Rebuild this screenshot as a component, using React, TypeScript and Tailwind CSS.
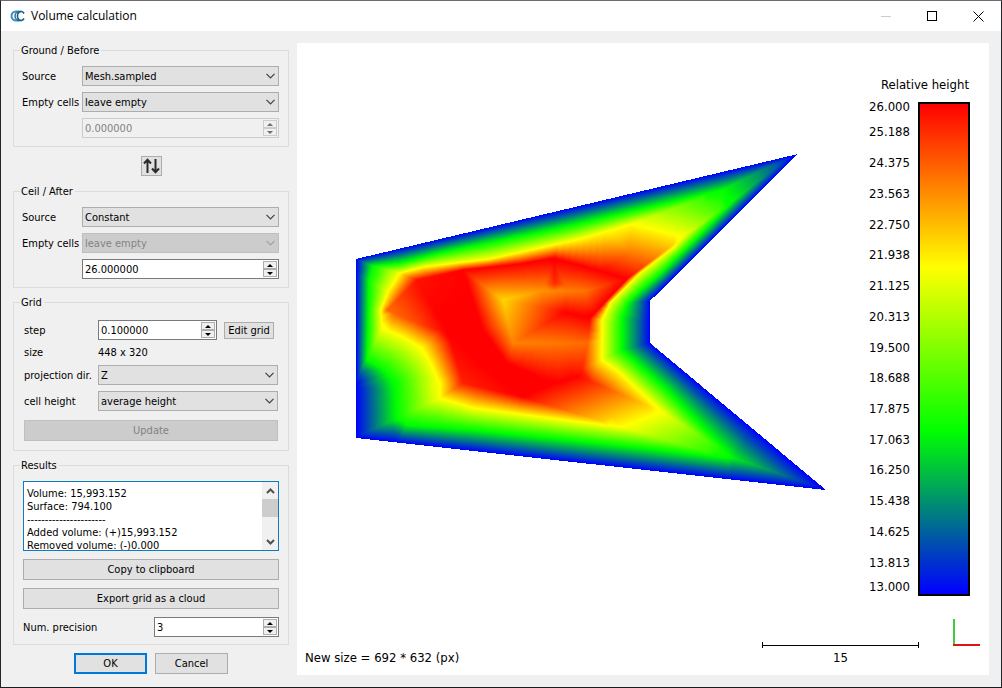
import { useState } from 'react';
import type { ReactNode } from 'react';
import clsx from 'clsx';

type Vertex = [x: number, y: number, t: number];
type Triangle = [number, number, number];

// relative heights: 0 = lowest (blue), 1 = highest (red)
const GREEN = 1 / 3;
const YELLOW = 2 / 3;

const RAMP = [
  { offset: 0, color: '#0000ff' },
  { offset: GREEN, color: '#00ff00' },
  { offset: YELLOW, color: '#ffff00' },
  { offset: 1, color: '#ff0000' },
];

const OUTLINE: Vertex[] = [
  [356, 259, 0], [798, 154, 0], [650, 301, 0], [650, 343, 0], [826, 490, 0], [356, 438, 0], [356, 259, 0],
];

const level = (t: number, points: [number, number][]): Vertex[] => points.map(([x, y]) => [x, y, t]);

const BREAKLINES: Vertex[][] = [
  OUTLINE,
  level(GREEN, [
    [373, 266], [400, 263], [440, 253], [560, 228], [640, 209], [722, 190], [733, 201], [703, 232], [693, 242],
    [660, 274], [640, 291], [628, 303], [622, 318], [622, 350], [667, 390], [728, 453], [728, 458], [643, 448],
    [560, 439], [473, 430], [407, 425], [397, 418], [395, 383], [383, 370], [367, 360], [368, 327],
    [369, 280], [373, 266],
  ]),
  level(YELLOW, [
    [400, 273], [423, 267], [490, 259], [580, 239], [632, 224], [683, 237], [673, 248], [640, 273],
    [610, 303], [602, 320], [602, 360], [620, 373], [662, 412], [622, 427], [580, 422], [473, 408],
    [440, 398], [440, 383], [430, 362], [422, 348], [403, 337], [382, 328], [381, 310], [388, 292], [400, 273],
  ]),
  // upper wing
  [[632, 224, YELLOW], [722, 190, GREEN]],
  [[657, 230, YELLOW], [727, 195, GREEN]],
  [[683, 237, YELLOW], [733, 201, GREEN]],
  [[722, 190, GREEN], [768, 167, 0.15], [798, 154, 0]],
  [[733, 201, GREEN], [770, 172, 0.15], [798, 154, 0]],
  // lower wing
  [[662, 412, YELLOW], [728, 453, GREEN]],
  [[642, 419, YELLOW], [728, 456, GREEN]],
  [[622, 427, YELLOW], [728, 458, GREEN]],
  [[728, 456, GREEN], [780, 474, 0.16], [826, 490, 0]],
  // corners
  [[356, 259, 0], [373, 266, GREEN], [400, 273, YELLOW], [417, 280, 0.98]],
  [[356, 438, 0], [397, 418, GREEN], [440, 398, YELLOW], [463, 383, 0.96]],
  [[356, 378, 0], [367, 360, GREEN], [382, 328, YELLOW]],
  [[650, 301, 0], [628, 303, GREEN]],
  [[650, 343, 0], [622, 350, GREEN], [602, 360, YELLOW], [588, 343, 0.86]],
  // plateau
  [[387, 310, 0.86], [417, 280, 0.98], [463, 270, 1], [520, 264, 1], [554, 258, 1], [627, 279, 1]],
  [[387, 310, 0.86], [415, 322, 0.9], [448, 333, 1], [463, 383, 0.96], [523, 397, 1], [553, 384, 1], [578, 376, 1]],
  [[417, 280, 0.98], [437, 315, 1], [448, 333, 1], [480, 365, 1], [523, 397, 1]],
  [[463, 270, 1], [473, 300, 1], [483, 330, 1], [507, 363, 1], [553, 383, 1]],
  [[627, 279, 1], [590, 318, 1], [565, 312, 1]],
  [[590, 320, 1], [588, 343, 0.86], [582, 370, 0.96]],
  // inner pit
  [[463, 270, 1], [503, 300, 0.72], [542, 291, 0.81], [585, 291, 0.85], [627, 279, 1]],
  [[503, 300, 0.72], [513, 343, 0.83], [550, 343, 0.84], [588, 343, 0.86]],
  [[503, 300, 0.72], [565, 312, 1], [513, 343, 0.83], [507, 363, 1]],
  [[554, 262, 1], [555, 283, 0.95]],
  [[542, 291, 0.81], [554, 262, 1], [568, 291, 0.84]],
  // slopes from the plateau down to the wings
  [[632, 224, YELLOW], [627, 279, 1]],
  [[657, 230, YELLOW], [627, 279, 1]],
  [[683, 237, YELLOW], [627, 279, 1]],
  [[578, 376, 1], [662, 412, YELLOW]],
  [[578, 376, 1], [642, 419, YELLOW]],
  [[578, 376, 1], [622, 427, YELLOW]],
  [[523, 397, 1], [622, 427, YELLOW]],
];

function densify(line: Vertex[], step: number): Vertex[] {
  const out: Vertex[] = [];
  for (let i = 0; i < line.length - 1; i++) {
    const [x0, y0, t0] = line[i];
    const [x1, y1, t1] = line[i + 1];
    const n = Math.max(1, Math.round(Math.hypot(x1 - x0, y1 - y0) / step));
    for (let k = 0; k < n; k++) {
      const f = k / n;
      out.push([x0 + (x1 - x0) * f, y0 + (y1 - y0) * f, t0 + (t1 - t0) * f]);
    }
  }
  out.push(line[line.length - 1]);
  return out;
}

function collectVertices(): Vertex[] {
  const vertices: Vertex[] = [];
  for (const line of BREAKLINES) {
    for (const v of densify(line, 7)) {
      if (!vertices.some((u) => Math.hypot(u[0] - v[0], u[1] - v[1]) < 2.5)) vertices.push(v);
    }
  }
  return vertices;
}

function inCircumcircle(p: Vertex, a: Vertex, b: Vertex, c: Vertex) {
  const bx = b[0] - a[0];
  const by = b[1] - a[1];
  const cx = c[0] - a[0];
  const cy = c[1] - a[1];
  const d = 2 * (bx * cy - by * cx);
  if (d === 0) return true;
  const ux = (cy * (bx * bx + by * by) - by * (cx * cx + cy * cy)) / d;
  const uy = (bx * (cx * cx + cy * cy) - cx * (bx * bx + by * by)) / d;
  const px = p[0] - a[0] - ux;
  const py = p[1] - a[1] - uy;
  return px * px + py * py < ux * ux + uy * uy - 1e-7;
}

// Bowyer-Watson
function triangulate(points: Vertex[]): Triangle[] {
  const n = points.length;
  const all: Vertex[] = [...points, [-20000, -18000, 0], [21000, -19000, 0], [500, 23000, 0]];
  let triangles: Triangle[] = [[n, n + 1, n + 2]];

  for (let i = 0; i < n; i++) {
    const edges = new Map<string, [number, number]>();
    triangles = triangles.filter(([a, b, c]) => {
      if (!inCircumcircle(all[i], all[a], all[b], all[c])) return true;
      for (const [u, v] of [[a, b], [b, c], [c, a]]) {
        const key = u < v ? `${u}-${v}` : `${v}-${u}`;
        if (edges.has(key)) edges.delete(key);
        else edges.set(key, [u, v]);
      }
      return false;
    });
    for (const [u, v] of edges.values()) triangles.push([u, v, i]);
  }
  return triangles.filter((t) => t.every((k) => k < n));
}

function insideOutline(x: number, y: number) {
  let inside = false;
  for (let i = 0; i < OUTLINE.length - 1; i++) {
    const [x0, y0] = OUTLINE[i];
    const [x1, y1] = OUTLINE[i + 1];
    if (y0 > y !== y1 > y && x < ((x1 - x0) * (y - y0)) / (y1 - y0) + x0) inside = !inside;
  }
  return inside;
}

function rampColor(t: number) {
  if (t < 0.01) return '#0000ff';
  if (t < 0.5) return '#00ff00';
  return t < 0.8 ? '#ffff00' : '#ff0000';
}

function buildFacets() {
  const vertices = collectVertices();
  return triangulate(vertices)
    .map((tri) => tri.map((k) => vertices[k]))
    .filter(([a, b, c]) => insideOutline((a[0] + b[0] + c[0]) / 3, (a[1] + b[1] + c[1]) / 3))
    .map(([a, b, c]) => {
      const points = [a, b, c].map(([x, y]) => `${x.toFixed(2)},${y.toFixed(2)}`).join(' ');
      const det = (b[0] - a[0]) * (c[1] - a[1]) - (c[0] - a[0]) * (b[1] - a[1]);
      const gx = ((b[2] - a[2]) * (c[1] - a[1]) - (c[2] - a[2]) * (b[1] - a[1])) / det;
      const gy = ((c[2] - a[2]) * (b[0] - a[0]) - (b[2] - a[2]) * (c[0] - a[0])) / det;
      const g2 = gx * gx + gy * gy;
      if (!(g2 > 1e-9)) return { points, flat: rampColor(a[2]) };
      const x1 = a[0] - (a[2] * gx) / g2;
      const y1 = a[1] - (a[2] * gy) / g2;
      return { points, x1, y1, x2: x1 + gx / g2, y2: y1 + gy / g2 };
    });
}

const facets = buildFacets();

function HeightMap() {
  return (
    <svg
      viewBox="297 43 692 632"
      shapeRendering="crispEdges"
      role="img"
      aria-label="Relative height"
      className="absolute inset-0 h-full w-full"
    >
      <defs>
        <linearGradient id="ramp">
          {RAMP.map((s) => (
            <stop key={s.color} offset={s.offset} stopColor={s.color} />
          ))}
        </linearGradient>
        {facets.map((f, i) =>
          f.flat ? null : (
            <linearGradient
              key={i}
              id={`facet-${i}`}
              href="#ramp"
              gradientUnits="userSpaceOnUse"
              x1={f.x1}
              y1={f.y1}
              x2={f.x2}
              y2={f.y2}
            />
          ),
        )}
      </defs>
      {facets.map((f, i) => (
        <polygon key={i} points={f.points} fill={f.flat ?? `url(#facet-${i})`} />
      ))}
    </svg>
  );
}

const TICKS = [
  '26.000', '25.188', '24.375', '23.563', '22.750', '21.938', '21.125', '20.313', '19.500',
  '18.688', '17.875', '17.063', '16.250', '15.438', '14.625', '13.813', '13.000',
];

function ColorScale() {
  return (
    <div className="mr-[19px] flex flex-1 flex-col self-end">
      <div className="pr-px text-right leading-4">Relative height</div>
      <div className="mt-[9px] flex flex-1 justify-end gap-2">
        <ul className="flex flex-col text-right leading-[10px]">
          {TICKS.map((tick, i) => (
            <li
              key={tick}
              className={clsx(
                'flex justify-end',
                i === 0 && 'h-[15px] items-start',
                i === TICKS.length - 1 && 'h-[18px] items-center',
                i > 0 && i < TICKS.length - 1 && 'flex-1 items-center',
              )}
            >
              {tick}
            </li>
          ))}
        </ul>
        <div className="w-[52px] border-2 border-black bg-[linear-gradient(in_srgb_to_top,#0000ff,#00ff00_33.3%,#ffff00_66.7%,#ff0000)]" />
      </div>
    </div>
  );
}

function Viewer() {
  return (
    <main className="relative flex min-w-0 flex-1 bg-white font-['DejaVu_Sans_Condensed','DejaVu_Sans',sans-serif] text-[13px] text-black">
      <HeightMap />
      <div className="relative flex flex-1 flex-col pt-[34px]">
        <ColorScale />
        <div className="mt-[23px] flex h-14 items-start pr-[9px] pl-2">
          <p className="mr-auto self-end pb-[9px] leading-4">New size = 692 * 632 (px)</p>
          <div className="mt-[23px] mr-[34px] flex w-[157px] flex-col">
            <div className="flex h-1.5 items-center border-x border-black">
              <div className="h-px w-full bg-black" />
            </div>
            <span className="pt-0.5 text-center leading-4">15</span>
          </div>
          <svg width="27" height="27" viewBox="0 0 27 27" shapeRendering="crispEdges" aria-hidden="true">
            <path d="M1 0v25" stroke="#3fca3f" strokeWidth="2" />
            <path d="M0 26h27" stroke="#dc1414" strokeWidth="2" />
          </svg>
        </div>
      </div>
    </main>
  );
}

function Group({ title, className, children }: { title: string; className?: string; children: ReactNode }) {
  return (
    <fieldset className={clsx('min-w-0 border border-[#dcdcdc]', className)}>
      <legend className="ml-1.5 pt-px pr-0.5 pl-px leading-[13px]">{title}</legend>
      {children}
    </fieldset>
  );
}

interface SelectProps {
  id: string;
  options: string[];
  disabled?: boolean;
}

function Select({ id, options, disabled }: SelectProps) {
  return (
    <div className="relative min-w-0 flex-1">
      <select
        id={id}
        disabled={disabled}
        className="block h-5 w-full appearance-none border border-[#adadad] bg-[#e1e1e1] px-0.5 pt-px text-black opacity-100 disabled:border-[#bfbfbf] disabled:bg-[#cccccc] disabled:text-[#838383]"
      >
        {options.map((o) => (
          <option key={o}>{o}</option>
        ))}
      </select>
      <svg
        width="9"
        height="6"
        viewBox="0 0 9 6"
        fill="none"
        stroke={disabled ? '#a0a0a0' : '#404040'}
        strokeWidth="1.2"
        aria-hidden="true"
        className="pointer-events-none absolute top-[7px] right-1"
      >
        <path d="M.5 .8 4.500 4.800 8.500 .8" />
      </svg>
    </div>
  );
}

interface SpinBoxProps {
  id: string;
  label?: string;
  initial: string;
  step?: number;
  disabled?: boolean;
  className?: string;
}

function SpinBox({ id, label, initial, step = 1, disabled, className }: SpinBoxProps) {
  const [value, setValue] = useState(initial);
  const digits = initial.split('.')[1]?.length ?? 0;
  const change = (delta: number) => setValue((Number(value) + delta).toFixed(digits));

  const buttonClass =
    'flex h-2 w-3.5 items-center justify-center border border-[#adadad] bg-[#f0f0f0] text-black disabled:border-[#cccccc] disabled:text-[#6d6d6d]';

  return (
    <div
      className={clsx(
        'flex h-5 items-center border pr-px',
        disabled ? 'border-[#cccccc] bg-[#f0f0f0]' : 'border-[#7a7a7a] bg-white',
        className,
      )}
    >
      <input
        id={id}
        type="text"
        inputMode="decimal"
        aria-label={label}
        value={value}
        disabled={disabled}
        onChange={(e) => setValue(e.target.value)}
        className="w-0 min-w-0 flex-1 pt-0.5 pl-0.5 leading-4 outline-none disabled:text-[#838383]"
      />
      <div className="flex flex-col">
        <button type="button" aria-label="Increase" disabled={disabled} onClick={() => change(step)} className={buttonClass}>
          <svg width="6" height="3" viewBox="0 0 6 3" fill="currentColor" aria-hidden="true">
            <path d="M0 3 3 0l3 3z" />
          </svg>
        </button>
        <button type="button" aria-label="Decrease" disabled={disabled} onClick={() => change(-step)} className={buttonClass}>
          <svg width="6" height="3" viewBox="0 0 6 3" fill="currentColor" aria-hidden="true">
            <path d="M0 0 3 3l3-3z" />
          </svg>
        </button>
      </div>
    </div>
  );
}

interface PushButtonProps {
  children: ReactNode;
  disabled?: boolean;
  className?: string;
}

function PushButton({ children, disabled, className }: PushButtonProps) {
  return (
    <button
      type="button"
      disabled={disabled}
      className={clsx(
        'flex items-center justify-center bg-[#e1e1e1] pt-px disabled:border-[#bfbfbf] disabled:bg-[#cccccc] disabled:text-[#838383]',
        className,
      )}
    >
      {children}
    </button>
  );
}

const SOURCES = ['Constant', 'Mesh.sampled'];

function SourceRows({ prefix, sources, emptyDisabled }: { prefix: string; sources: string[]; emptyDisabled?: boolean }) {
  return (
    <>
      <div className="flex items-center">
        <label htmlFor={`${prefix}-source`} className="w-[60px] pt-0.5">Source</label>
        <Select id={`${prefix}-source`} options={sources} />
      </div>
      <div className="flex items-center">
        <label htmlFor={`${prefix}-empty`} className="w-[60px] pt-0.5 whitespace-nowrap">Empty cells</label>
        <Select id={`${prefix}-empty`} options={['leave empty']} disabled={emptyDisabled} />
      </div>
    </>
  );
}

const REPORT = [
  'Volume: 15,993.152',
  'Surface: 794.100',
  '----------------------',
  'Added volume: (+)15,993.152',
  'Removed volume: (-)0.000',
].join('\n');

function Report() {
  return (
    <div className="flex h-[70px] border border-[#0f7abf] bg-white">
      <textarea
        readOnly
        aria-label="Results"
        value={REPORT}
        className="min-w-0 flex-1 resize-none overflow-hidden pt-[5px] pl-[3px] leading-[13px] outline-none"
      />
      <div className="flex w-4 flex-col bg-[#f0f0f0]">
        <button type="button" aria-label="Scroll up" className="flex h-[17px] items-center justify-center">
          <svg width="9" height="6" viewBox="0 0 9 6" fill="none" stroke="#505050" strokeWidth="2" aria-hidden="true">
            <path d="M1 5 4.500 1.500 8 5" />
          </svg>
        </button>
        <div className="h-[18px] bg-[#cdcdcd]" />
        <button type="button" aria-label="Scroll down" className="mt-auto flex h-[17px] items-center justify-center">
          <svg width="9" height="6" viewBox="0 0 9 6" fill="none" stroke="#505050" strokeWidth="2" aria-hidden="true">
            <path d="M1 1 4.500 4.500 8 1" />
          </svg>
        </button>
      </div>
    </div>
  );
}

function Settings() {
  return (
    <form className="flex w-[276px] shrink-0 flex-col" onSubmit={(e) => e.preventDefault()}>
      <Group title="Ground / Before">
        <div className="flex flex-col gap-1.5 pt-[9px] pr-[9px] pb-2 pl-2">
          <SourceRows prefix="ground" sources={[...SOURCES].reverse()} />
          <SpinBox id="ground-value" label="Ground height" initial="0.000000" disabled className="ml-[60px]" />
        </div>
      </Group>

      <button
        type="button"
        aria-label="Swap"
        className="mt-[9px] mb-2 flex h-5 w-[21px] items-center justify-center self-center border border-[#adadad] bg-[#e1e1e1]"
      >
        <svg width="17" height="16" viewBox="0 0 17 16" fill="none" stroke="#2b2b2b" strokeWidth="2" aria-hidden="true">
          <path d="M4.500 15V2M1 5.500 4.500 1.800 8 5.500M12.500 1v13M9 10.500l3.500 3.700 3.500-3.700" />
        </svg>
      </button>

      <Group title="Ceil / After">
        <div className="flex flex-col gap-1.5 pt-[9px] pr-[9px] pb-2 pl-2">
          <SourceRows prefix="ceil" sources={SOURCES} emptyDisabled />
          <SpinBox id="ceil-value" label="Ceil height" initial="26.000000" className="ml-[60px]" />
        </div>
      </Group>

      <Group title="Grid" className="mt-[7px]">
        <div className="flex flex-col gap-1.5 px-2.5 pt-[11px] pb-[9px]">
          <div className="flex items-center">
            <label htmlFor="grid-step" className="w-[74px] pt-0.5">step</label>
            <SpinBox id="grid-step" initial="0.100000" step={0.1} className="w-[119px]" />
            <PushButton className="ml-[7px] h-[17px] w-[50px] border border-[#adadad] whitespace-nowrap">Edit grid</PushButton>
          </div>
          <div className="flex leading-[13px]">
            <span className="w-[74px]">size</span>
            <span>448 x 320</span>
          </div>
          <div className="flex items-center">
            <label htmlFor="grid-projection" className="w-[74px] pt-0.5 whitespace-nowrap">projection dir.</label>
            <Select id="grid-projection" options={['Z', 'X', 'Y']} />
          </div>
          <div className="flex items-center">
            <label htmlFor="grid-cell" className="w-[74px] pt-0.5">cell height</label>
            <Select id="grid-cell" options={['average height', 'minimum height', 'maximum height']} />
          </div>
          <PushButton disabled className="mt-[3px] h-[21px] border border-[#adadad]">Update</PushButton>
        </div>
      </Group>

      <Group title="Results" className="mt-[7px]">
        <div className="flex flex-col gap-2 px-[9px] pt-[9px] pb-[7px]">
          <Report />
          <PushButton className="h-[21px] border border-[#adadad]">Copy to clipboard</PushButton>
          <PushButton className="h-[21px] border border-[#adadad]">Export grid as a cloud</PushButton>
          <div className="flex items-center justify-between">
            <label htmlFor="precision" className="pt-0.5">Num. precision</label>
            <SpinBox id="precision" initial="3" className="w-[125px]" />
          </div>
        </div>
      </Group>

      <div className="mt-2 flex justify-center gap-2">
        <PushButton className="h-[21px] w-[73px] border-2 border-[#0078d7]">OK</PushButton>
        <PushButton className="h-[21px] w-[73px] border border-[#adadad]">Cancel</PushButton>
      </div>
    </form>
  );
}

function TitleBar() {
  return (
    <header className="flex h-[30px] items-center bg-white pl-[9px]">
      <svg width="15" height="12" viewBox="0 0 15 12" fill="none" aria-hidden="true">
        <path d="M9 1.500H6A4.500 4.500 0 0 0 6 10.500H9" stroke="#3d8fbb" strokeWidth="2" />
        <path d="M11 1.500H9.500A4.500 4.500 0 0 0 9.500 10.500H11" stroke="#2a739f" strokeWidth="1.500" />
        <path d="M14 3.500A3.600 4.500 0 1 0 14 8.500" stroke="#1d5f8a" strokeWidth="1.600" />
      </svg>
      <h1 className="ml-1.5 font-['Open_Sans',sans-serif] text-xs">Volume calculation</h1>
      <div className="ml-auto flex h-full">
        <button type="button" aria-label="Minimize" disabled className="flex w-[46px] items-center justify-center">
          <span className="h-px w-2.5 bg-[#cccccc]" />
        </button>
        <button type="button" aria-label="Maximize" className="flex w-[46px] items-center justify-center">
          <span className="size-2.5 border border-black" />
        </button>
        <button type="button" aria-label="Close" className="flex w-[46px] items-center justify-center">
          <svg width="11" height="11" viewBox="0 0 11 11" stroke="#000" aria-hidden="true">
            <path d="M.5 .5l10 10M10.500 .5l-10 10" />
          </svg>
        </button>
      </div>
    </header>
  );
}

export default function App() {
  return (
    <div className="flex min-h-screen flex-col border border-t-[#6e6b6e] border-r-[#23272b] border-b-[#1c1c1c] border-l-[#23272b] bg-[#f0f0f0] font-['DejaVu_Sans_Condensed','DejaVu_Sans',sans-serif] text-[11px] leading-4 text-black">
      <TitleBar />
      <div className="flex flex-1 gap-2 p-3">
        <Settings />
        <Viewer />
      </div>
    </div>
  );
}
